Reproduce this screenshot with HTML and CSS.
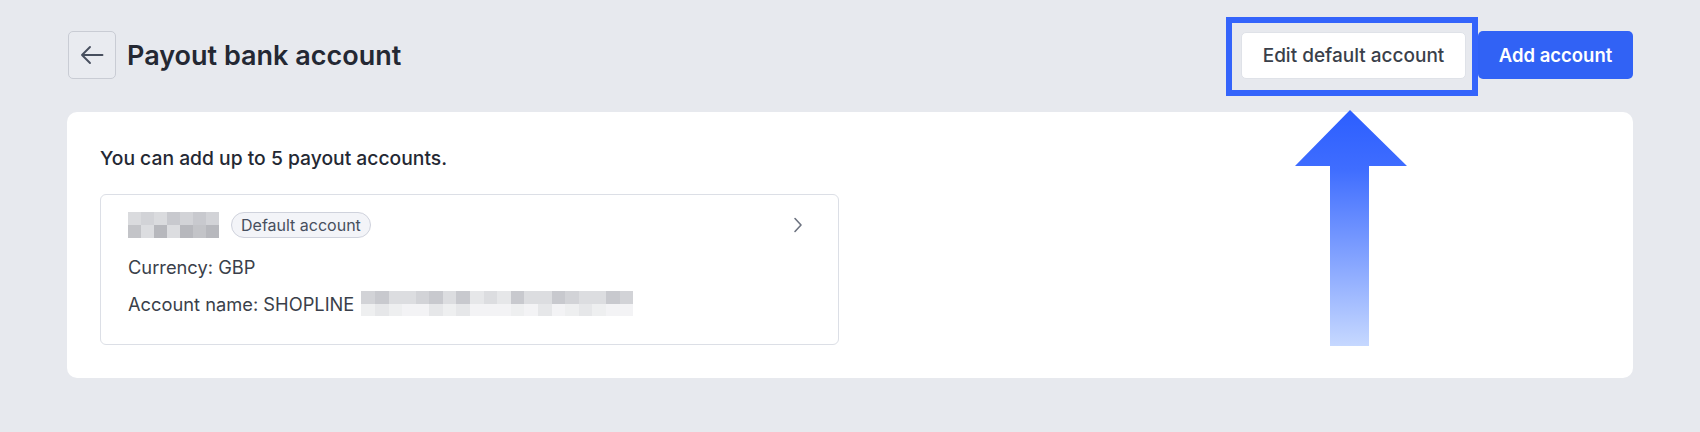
FILE: index.html
```html
<!DOCTYPE html>
<html lang="en">
<head>
<meta charset="utf-8">
<title>Payout bank account</title>
<link rel="stylesheet" href="styles.css">
</head>
<body>
<div class="page">
  <header class="header">
    <div class="header-left">
      <button class="back-btn" aria-label="Back">
        <svg width="24" height="24" viewBox="0 0 24 24" fill="none" stroke="#474f5e" stroke-width="1.9" stroke-linecap="round" stroke-linejoin="round"><path d="M22.5 12H2M10 4L2 12L10 20"/></svg>
      </button>
      <h1 class="title">Payout bank account</h1>
    </div>
    <div class="header-actions">
      <button class="btn btn-secondary">Edit default account</button>
      <button class="btn btn-primary">Add account</button>
      <div class="highlight-box"></div>
    </div>
  </header>

  <section class="card">
    <p class="hint">You can add up to 5 payout accounts.</p>
    <div class="account">
      <div class="account-top">
        <div class="account-head">
          <div class="blur blur-bank">
            <div class="blur-row">
              <span class="c1"></span><span class="c2"></span><span class="c1"></span><span class="c3"></span><span class="c2"></span><span class="c3"></span><span class="c2"></span>
            </div>
            <div class="blur-row">
              <span class="c4"></span><span class="c5"></span><span class="c6"></span><span class="c5"></span><span class="c6"></span><span class="c4"></span><span class="c6"></span>
            </div>
          </div>
          <span class="badge">Default account</span>
        </div>
        <svg class="chevron" width="10" height="16" viewBox="0 0 10 16" fill="none" stroke="#6d7380" stroke-width="1.6" stroke-linecap="round" stroke-linejoin="round"><path d="M2 1.5L8 8L2 14.5"/></svg>
      </div>
      <div class="line line-currency">Currency: GBP</div>
      <div class="line line-name">
        <span>Account name: SHOPLINE</span>
        <div class="blur blur-name">
          <div class="blur-row">
            <span class="c2"></span><span class="c3"></span><span class="c5"></span><span class="c5"></span><span class="c2"></span><span class="c3"></span><span class="c5"></span><span class="c3"></span><span class="c7"></span><span class="c5"></span><span class="c7"></span><span class="c3"></span><span class="c5"></span><span class="c5"></span><span class="c3"></span><span class="c2"></span><span class="c5"></span><span class="c5"></span><span class="c3"></span><span class="c2"></span>
          </div>
          <div class="blur-row">
            <span class="c8"></span><span class="c7"></span><span class="c8"></span><span class="c9"></span><span class="c9"></span><span class="c7"></span><span class="c8"></span><span class="c7"></span><span class="c9"></span><span class="c9"></span><span class="c9"></span><span class="c8"></span><span class="c9"></span><span class="c7"></span><span class="c9"></span><span class="c8"></span><span class="c7"></span><span class="c8"></span><span class="c9"></span><span class="c9"></span>
          </div>
        </div>
      </div>
    </div>
  </section>

  <svg class="arrow" width="112" height="236" viewBox="0 0 112 236">
    <defs>
      <linearGradient id="ag" x1="0" y1="0" x2="0" y2="1">
        <stop offset="0" stop-color="#2c5eff"/>
        <stop offset="0.25" stop-color="#3f6dff"/>
        <stop offset="1" stop-color="#c6d8ff"/>
      </linearGradient>
    </defs>
    <polygon points="55,0 112,56 74,56 74,236 35,236 35,56 0,56" fill="url(#ag)"/>
  </svg>
</div>
</body>
</html>
```

FILE: styles.css
```css
* { box-sizing: border-box; }
html, body { margin: 0; padding: 0; }
body {
  background: #e7e9ee;
  font-family: Inter, "Noto Sans", "Liberation Sans", sans-serif;
  color: #242833;
  width: 1700px;
  height: 432px;
  overflow: hidden;
}
.page {
  position: relative;
  padding: 31px 67px 0 67px;
}
.header {
  display: flex;
  justify-content: space-between;
  align-items: center;
  height: 48px;
}
.header-left {
  display: flex;
  align-items: center;
  gap: 11px;
}
.back-btn {
  width: 48px;
  height: 48px;
  margin-left: 1px;
  border: 1px solid #c9ccd4;
  border-radius: 5px;
  background: #e9ebf0;
  display: flex;
  align-items: center;
  justify-content: center;
  padding: 0;
}
.title {
  margin: 0;
  font-size: 27px;
  font-weight: 600;
  color: #242833;
}
.header-actions {
  position: relative;
  display: flex;
  align-items: center;
  gap: 12px;
}
.btn {
  height: 48px;
  border-radius: 5px;
  font-family: Inter, "Noto Sans", sans-serif;
  padding: 0;
  white-space: nowrap;
}
.btn-secondary {
  width: 225px;
  height: 47px;
  background: #ffffff;
  border: 1px solid #dfe2e8;
  color: #3a3f4a;
  font-size: 19px;
  font-weight: 500;
}
.btn-primary {
  width: 155px;
  background: #3162f5;
  border: none;
  color: #ffffff;
  font-size: 18.5px;
  font-weight: 600;
}
.highlight-box {
  position: absolute;
  left: -15px;
  top: -14px;
  width: 252px;
  height: 79px;
  border: 6px solid #3464fb;
  pointer-events: none;
}
.card {
  margin-top: 33px;
  background: #ffffff;
  border-radius: 10px;
  padding: 33px 794px 33px 33px;
  width: 1566px;
}
.hint {
  margin: 0;
  font-size: 19.3px;
  line-height: 26px;
  font-weight: 500;
  color: #242833;
}
.account {
  margin-top: 23px;
  border: 1px solid #dcdfe6;
  border-radius: 6px;
  padding: 16px 36px 0 27px;
  height: 151px;
}
.account-top {
  display: flex;
  justify-content: space-between;
  align-items: center;
  height: 28px;
}
.account-head {
  display: flex;
  align-items: center;
  gap: 11px;
}
.blur {
  display: flex;
  flex-direction: column;
}
.blur-row { display: flex; }
.blur-row span { display: block; }
.blur-bank .blur-row span { width: 13px; height: 13px; }
.blur-bank { width: 92px; overflow: hidden; }
.blur-name { margin-left: 7px; width: 272px; overflow: hidden; }
.blur-name .blur-row span { width: 13.6px; height: 12.5px; }
.c1 { background: #dadbde; }
.c2 { background: #d2d3d7; }
.c3 { background: #c8c9ce; }
.c4 { background: #c3c4c8; }
.c5 { background: #dcdde0; }
.c6 { background: #b7b8bd; }
.c7 { background: #e6e7e9; }
.c8 { background: #eeeff0; }
.c9 { background: #f3f3f5; }
.badge {
  display: inline-flex;
  align-items: center;
  height: 26px;
  padding: 0 9px;
  border: 1px solid #cfd2dc;
  border-radius: 13px;
  background: #f3f4f8;
  font-size: 16px;
  color: #474f5e;
}
.chevron { margin-right: -1px; }
.line {
  font-size: 18.3px;
  line-height: 24px;
  color: #3a3f4a;
}
.line-currency { margin-top: 16px; }
.line-name {
  margin-top: 12px;
  display: flex;
  align-items: center;
}
.arrow {
  position: absolute;
  left: 1295px;
  top: 110px;
}
```
